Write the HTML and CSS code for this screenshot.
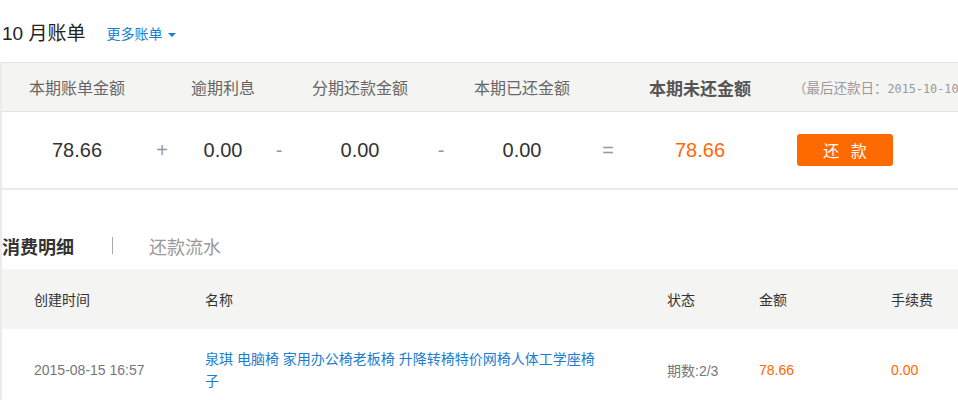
FILE: index.html
```html
<!DOCTYPE html>
<html lang="zh-CN">
<head>
<meta charset="utf-8">
<title>10 月账单</title>
<link rel="stylesheet" href="styles.css">
</head>
<body>
<div class="top">
  <h1 class="title">10 月账单</h1>
  <a class="more" href="#">更多账单<span class="caret"></span></a>
</div>
<div class="main">
  <div class="sum-head">
    <div class="cell">本期账单金额</div>
    <div class="op"></div>
    <div class="cell">逾期利息</div>
    <div class="op"></div>
    <div class="cell">分期还款金额</div>
    <div class="op"></div>
    <div class="cell">本期已还金额</div>
    <div class="op"></div>
    <div class="cell strong">本期未还金额</div>
    <div class="due">（最后还款日：<span class="mono">2015-10-10）</span></div>
  </div>
  <div class="sum-body">
    <div class="cell num">78.66</div>
    <div class="op">+</div>
    <div class="cell num">0.00</div>
    <div class="op">-</div>
    <div class="cell num">0.00</div>
    <div class="op">-</div>
    <div class="cell num">0.00</div>
    <div class="op">=</div>
    <div class="cell num orange">78.66</div>
    <div class="pay-wrap"><button class="pay">还 款</button></div>
  </div>
  <div class="tabs">
    <span class="tab active">消费明细</span>
    <span class="sep"></span>
    <span class="tab">还款流水</span>
  </div>
  <div class="thead">
    <div class="c">创建时间</div>
    <div class="c">名称</div>
    <div class="c">状态</div>
    <div class="c">金额</div>
    <div class="c">手续费</div>
  </div>
  <div class="trow">
    <div class="c gray">2015-08-15 16:57</div>
    <div class="c"><a class="name" href="#">泉琪 电脑椅 家用办公椅老板椅 升降转椅特价网椅人体工学座椅子</a></div>
    <div class="c gray">期数:2/3</div>
    <div class="c orange">78.66</div>
    <div class="c orange">0.00</div>
  </div>
</div>
</body>
</html>
```
FILE: styles.css
```css
html, body {
  margin: 0;
  padding: 0;
  background: #fff;
}
body {
  font-family: "Liberation Sans", "Noto Sans CJK SC", sans-serif;
  color: #333;
  width: 958px;
  overflow: hidden;
}
.top {
  height: 62px;
  box-sizing: border-box;
  padding: 5px 0 0 2px;
  display: flex;
  align-items: center;
}
.title {
  margin: 0;
  font-size: 19px;
  font-weight: normal;
  color: #222;
  line-height: 24px;
}
.more {
  margin-left: 21px;
  font-size: 14px;
  color: #1a7ed0;
  text-decoration: none;
  display: flex;
  align-items: center;
  line-height: 20px;
}
.caret {
  display: inline-block;
  width: 0;
  height: 0;
  margin: 3px 0 0 6px;
  border-left: 4px solid transparent;
  border-right: 4px solid transparent;
  border-top: 4px solid #1a7ed0;
}
.main {
  border-left: 2px solid #ebebeb;
}
.sum-head,
.sum-body {
  display: grid;
  grid-template-columns: 150px 20px 102px 10px 152px 10px 152px 20px 164px 1fr;
  align-items: center;
  text-align: center;
}
.sum-head {
  height: 48px;
  background: #f4f4f2;
  border-top: 1px solid #e4e4e4;
  border-bottom: 1px solid #e4e4e4;
  font-size: 16px;
  color: #666;
}
.sum-head .strong {
  font-weight: bold;
  font-size: 17px;
  color: #555;
}
.due {
  text-align: left;
  padding-left: 11px;
  white-space: nowrap;
  overflow: hidden;
  font-size: 13.5px;
  color: #999;
}
.mono {
  font-family: "DejaVu Sans Mono", monospace;
  font-size: 11.8px;
}
.sum-body {
  height: 76px;
  border-bottom: 2px solid #ebebeb;
}
.num {
  font-size: 20px;
  color: #333;
}
.op {
  font-size: 20px;
  color: #999;
}
.orange {
  color: #ff6600;
}
.sum-body .orange {
  color: #ff6a00;
}
.pay-wrap {
  text-align: left;
  padding-left: 15px;
}
.pay {
  width: 96px;
  height: 32px;
  border: 0;
  border-radius: 3px;
  background: #ff6a00;
  color: #fff;
  font-family: "Noto Sans CJK SC", sans-serif;
  font-size: 16px;
  letter-spacing: 4px;
  padding: 0 0 0 4px;
  display: block;
}
.tabs {
  height: 79px;
  box-sizing: border-box;
  padding-bottom: 11px;
  display: flex;
  align-items: flex-end;
  font-family: "Noto Sans CJK SC", sans-serif;
  font-size: 18px;
  line-height: 24px;
}
.tab {
  color: #999;
}
.tab.active {
  color: #333;
  font-weight: bold;
}
.sep {
  width: 1px;
  height: 17px;
  background: #aaa;
  margin: 0 36px 4px 38px;
}
.thead,
.trow {
  display: grid;
  grid-template-columns: 171px 462px 92px 132px 1fr;
  align-items: center;
  font-size: 14px;
}
.thead {
  height: 60px;
  background: #f4f4f2;
  color: #333;
}
.c {
  padding-left: 32px;
  white-space: nowrap;
}
.trow {
  height: 82px;
}
.trow .c:nth-child(2) {
  white-space: normal;
}
.gray {
  color: #777;
}
.name {
  display: block;
  max-width: 400px;
  color: #1a7ed0;
  text-decoration: none;
  line-height: 22px;
}
```
